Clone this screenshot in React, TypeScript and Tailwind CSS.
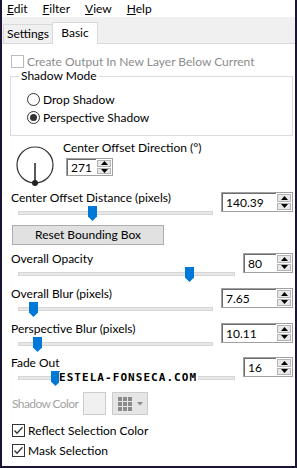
import React from 'react';

function Check({ checked, disabled }: { checked?: boolean; disabled?: boolean }) {
  return (
    <div
      className={`w-[13px] h-[13px] shrink-0 flex items-center justify-center bg-white border ${
        disabled ? 'border-[#bcbcbc]' : 'border-[#333333]'
      }`}
    >
      {checked && (
        <svg width="11" height="11" viewBox="0 0 11 11">
          <path d="M1.5 5.5L4 8.2L9.5 2.2" fill="none" stroke="#333" strokeWidth="1.3" />
        </svg>
      )}
    </div>
  );
}

function Radio({ on }: { on?: boolean }) {
  return (
    <div className="w-[13px] h-[13px] shrink-0 rounded-full border border-[#333333] bg-white flex items-center justify-center">
      {on && <div className="w-[7px] h-[7px] rounded-full bg-[#333333]" />}
    </div>
  );
}

function Arrow({ up }: { up?: boolean }) {
  return (
    <svg width="7" height="4" viewBox="0 0 7 4">
      <path d={up ? 'M0 4L3.5 0L7 4Z' : 'M0 0L3.5 4L7 0Z'} fill="#000" />
    </svg>
  );
}

function SpinBox({ value, size }: { value: string; size: string }) {
  return (
    <div className={`${size} shrink-0 flex border border-[#a0a0a0] bg-white`}>
      <div className="flex-1 flex items-center pl-[3px] border-t border-l border-[#6e6e6e] text-[12px] leading-none">
        {value}
      </div>
      <div className="w-[16px] flex flex-col gap-px p-px">
        <div className="flex-1 flex items-center justify-center bg-[#e8e8e8] border border-[#b4b4b4]">
          <Arrow up />
        </div>
        <div className="flex-1 flex items-center justify-center bg-[#e8e8e8] border border-[#b4b4b4]">
          <Arrow />
        </div>
      </div>
    </div>
  );
}

function SliderRow({
  label,
  value,
  size,
  thumb,
  mark,
  className,
}: {
  label: string;
  value: string;
  size: string;
  thumb: number;
  mark?: boolean;
  className?: string;
}) {
  return (
    <div className={`flex items-start h-[30px] ${className ?? ''}`}>
      <div className="flex-1 mr-[8px]">
        <div className="h-[14px] leading-[14px] whitespace-nowrap">{label}</div>
        <div className="relative h-[16px] ml-[7px] pt-[6px]">
          <div className="h-[4px] bg-[#e7e7e7] border border-[#d6d6d6]" />
          <div className="absolute top-[1px]" style={{ left: thumb }}>
            <svg width="9" height="15" viewBox="0 0 9 15">
              <path d="M0 0H9V10.5L4.5 15L0 10.5Z" fill="#0078d7" />
            </svg>
          </div>
          {mark && (
            <div className="absolute top-[2px] left-[41px] h-[12px] bg-white pr-[1px] font-['DejaVu_Sans_Mono',monospace] font-bold text-[11px] leading-[12px] tracking-[1.05px] text-black">
              ESTELA-FONSECA.COM
            </div>
          )}
        </div>
      </div>
      <div className="mt-[1px]">
        <SpinBox value={value} size={size} />
      </div>
    </div>
  );
}

export default function App() {
  return (
    <div className="w-[297px] h-[468px] bg-white border-x-2 border-b-2 border-[#1c1433] flex flex-col overflow-hidden font-['Lato',sans-serif] text-[12px] text-black">
      {/* Menu */}
      <div className="h-[17px] flex items-center pl-[5px] gap-[15px] bg-white">
        <span><span className="underline">E</span>dit</span>
        <span><span className="underline">F</span>ilter</span>
        <span><span className="underline">V</span>iew</span>
        <span><span className="underline">H</span>elp</span>
      </div>

      {/* Tabs */}
      <div className="h-[27px] bg-[#f0f0f0] border-b border-[#d9d9d9] flex items-end">
        <div className="ml-[1px] w-[49px] h-[19px] flex items-center justify-center border-t border-l border-[#d9d9d9]">
          Settings
        </div>
        <div className="relative z-10 -mb-px w-[46px] h-[22px] bg-white border border-b-0 border-[#d9d9d9] flex items-center justify-center pb-[2px]">
          Basic
        </div>
      </div>

      {/* Content */}
      <div className="flex-1 flex flex-col pl-[9px] pr-[2px]">
        <div className="mt-[11px] h-[13px] flex items-center gap-[3px] text-[#8c8c8c]">
          <Check disabled />
          <span className="whitespace-nowrap">Create Output In New Layer Below Current</span>
        </div>

        <div className="relative mt-[8px] -ml-px h-[60px] border border-[#dcdcdc] pt-[16px] pl-[16px] flex flex-col gap-[5px]">
          <div className="absolute -top-[8px] left-[8px] bg-white px-[2px] leading-[14px]">Shadow Mode</div>
          <div className="flex items-center gap-[3px] h-[13px]">
            <Radio />
            <span>Drop Shadow</span>
          </div>
          <div className="flex items-center gap-[3px] h-[13px]">
            <Radio on />
            <span>Perspective Shadow</span>
          </div>
        </div>

        <div className="mt-[9px] flex items-start h-[44px]">
          <svg className="ml-[4px]" width="40" height="44" viewBox="0 0 40 44">
            <circle cx="20" cy="20" r="18" fill="none" stroke="#333" strokeWidth="1.2" />
            <line x1="20" y1="18" x2="20" y2="38" stroke="#222" strokeWidth="1.5" />
            <circle cx="20" cy="38" r="3" fill="#222" />
          </svg>
          <div className="ml-[8px] -mt-[4px] flex flex-col">
            <div className="h-[14px] leading-[14px] whitespace-nowrap">Center Offset Direction (°)</div>
            <div className="mt-[3px] ml-[3px]">
              <SpinBox value="271" size="w-[47px] h-[18px]" />
            </div>
          </div>
        </div>

        <SliderRow className="mt-[2px]" label="Center Offset Distance (pixels)" value="140.39" size="w-[72px] h-[20px]" thumb={70} />

        <div className="mt-[4px] ml-[1px] w-[152px] h-[20px] bg-[#e1e1e1] border border-[#adadad] flex items-center justify-center">
          Reset Bounding Box
        </div>

        <SliderRow className="mt-[7px]" label="Overall Opacity" value="80" size="w-[50px] h-[20px]" thumb={167} />
        <SliderRow className="mt-[5px]" label="Overall Blur (pixels)" value="7.65" size="w-[72px] h-[20px]" thumb={11} />
        <SliderRow className="mt-[5px]" label="Perspective Blur (pixels)" value="10.11" size="w-[72px] h-[20px]" thumb={15} />
        <SliderRow className="mt-[4px]" label="Fade Out" value="16" size="w-[50px] h-[20px]" thumb={33} mark />

        <div className="mt-[6px] h-[23px] flex items-center">
          <span className="ml-px w-[71px] shrink-0 overflow-visible text-[#a3a3a3] whitespace-nowrap tracking-[-0.6px]">Shadow Color</span>
          <div className="w-[23px] h-[23px] shrink-0 bg-[#f0f0f0] border border-[#cccccc]" />
          <div className="ml-[6px] w-[36px] h-[23px] bg-[#e5e5e5] border border-[#cccccc] flex items-center pl-[5px] gap-[5px]">
            <div className="grid grid-cols-3 gap-px">
              {Array.from({ length: 9 }).map((_, i) => (
                <div key={i} className="w-[4px] h-[4px] bg-[#8a8a8a]" />
              ))}
            </div>
            <svg width="6" height="4" viewBox="0 0 6 4">
              <path d="M0 0L3 3.5L6 0Z" fill="#8a8a8a" />
            </svg>
          </div>
        </div>

        <div className="mt-[9px] h-[13px] flex items-center gap-[3px] ml-px">
          <Check checked />
          <span>Reflect Selection Color</span>
        </div>
        <div className="mt-[7px] h-[13px] flex items-center gap-[3px] ml-px">
          <Check checked />
          <span>Mask Selection</span>
        </div>
      </div>
    </div>
  );
}
